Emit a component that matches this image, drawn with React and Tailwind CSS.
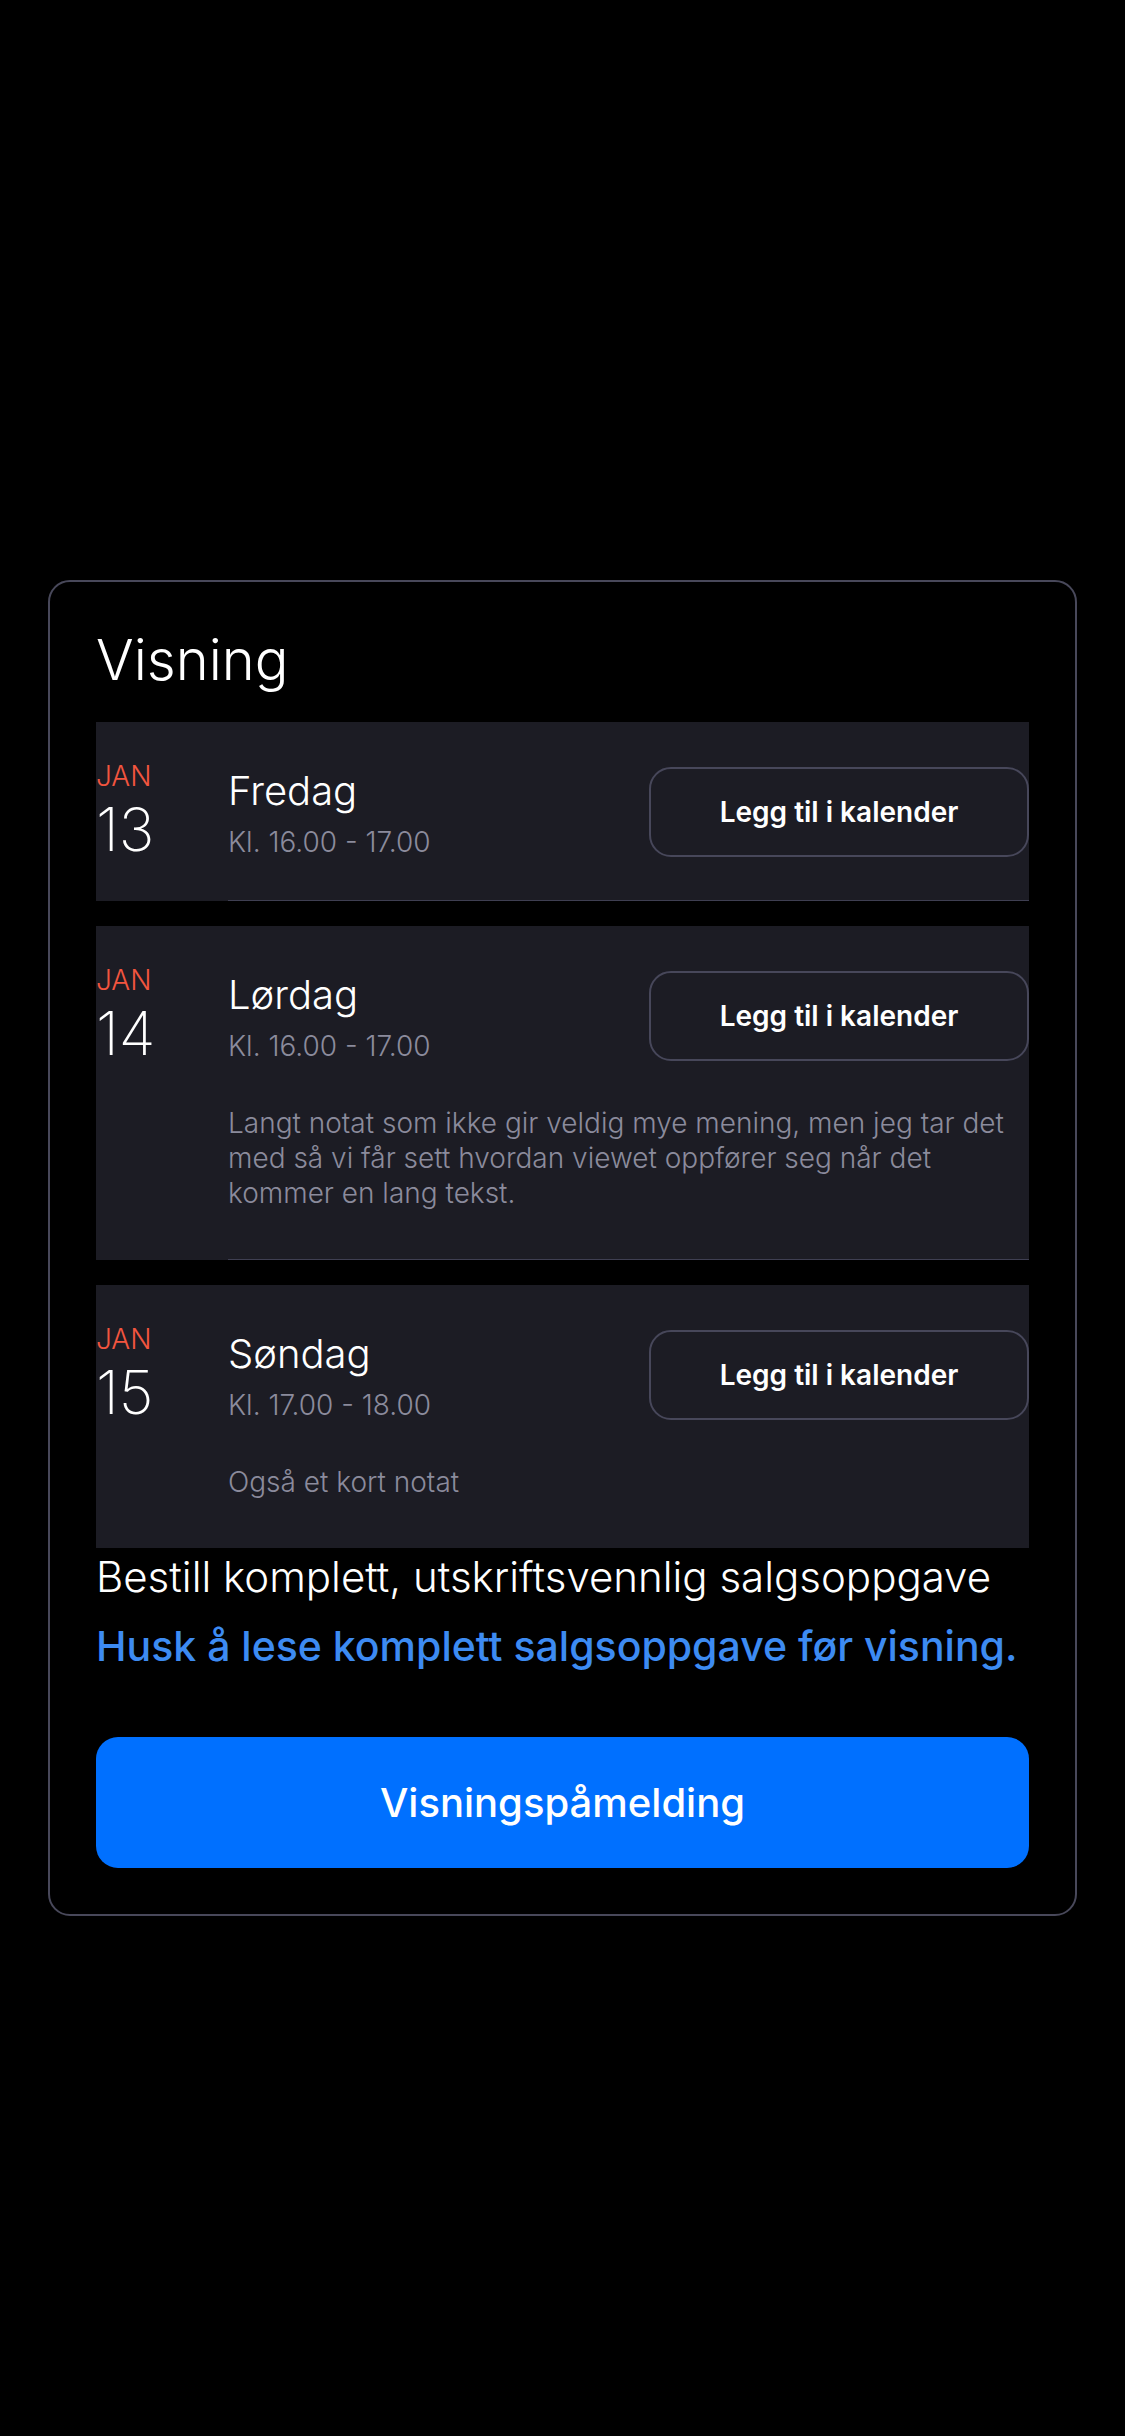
import React from "react";

const viewings = [
  { id: 1, month: "JAN", day: "13", weekday: "Fredag", time: "Kl. 16.00 - 17.00", note: "" },
  {
    id: 2,
    month: "JAN",
    day: "14",
    weekday: "Lørdag",
    time: "Kl. 16.00 - 17.00",
    note: "Langt notat som ikke gir veldig mye mening, men jeg tar det med så vi får sett hvordan viewet oppfører seg når det kommer en lang tekst.",
  },
  { id: 3, month: "JAN", day: "15", weekday: "Søndag", time: "Kl. 17.00 - 18.00", note: "Også et kort notat" },
];

const ViewingRow = ({ item, last }) => (
  <div className="flex bg-[#1c1c24]">
    <div className="w-[132px] shrink-0 pt-[37px]">
      <div className="text-[28px] leading-[34px] font-light text-[#f2553f]">{item.month}</div>
      <div className="text-[60px] leading-[72px] font-extralight text-white">{item.day}</div>
    </div>
    <div className={`flex-1 pt-[45px] pb-[42px] ${last ? "" : "border-b border-[#3f3f52]"}`}>
      <div className="flex items-start justify-between">
        <div>
          <div className="text-[40px] leading-[48px] font-light text-white">{item.weekday}</div>
          <div className="mt-[11px] text-[28px] leading-[32px] font-light text-[#8b8b9c]">{item.time}</div>
        </div>
        <button className="w-[380px] h-[90px] rounded-[22px] border-2 border-[#47475a] text-[28px] font-semibold text-white">
          Legg til i kalender
        </button>
      </div>
      {item.note && (
        <p className="mt-[44px] mb-[6px] pr-[20px] text-[28px] leading-[35px] font-light text-[#8b8b9c]">
          {item.note}
        </p>
      )}
    </div>
  </div>
);

export default function App() {
  return (
    <div
      className="min-h-screen bg-black px-[48px] pt-[580px]"
      style={{ fontFamily: "Inter, 'Noto Sans', sans-serif" }}
    >
      <div className="rounded-[22px] border-2 border-[#48485a] px-[46px] pt-[46px] pb-[46px]">
        <h1 className="text-[56px] leading-[64px] font-light text-white">Visning</h1>
        <div className="mt-[30px] flex flex-col gap-[25px]">
          {viewings.map((v, i) => (
            <ViewingRow key={v.id} item={v} last={i === viewings.length - 1} />
          ))}
        </div>
        <p className="mt-[4px] text-[42px] leading-[50px] font-light text-white whitespace-nowrap">
          Bestill komplett, utskriftsvennlig salgsoppgave
        </p>
        <p className="mt-[19px] text-[41px] leading-[50px] font-medium text-[#3d8bf2] whitespace-nowrap">
          Husk å lese komplett salgsoppgave før visning.
        </p>
        <button className="mt-[66px] w-full h-[131px] rounded-[22px] bg-[#0070ff] text-[40px] font-medium text-white">
          Visningspåmelding
        </button>
      </div>
    </div>
  );
}
